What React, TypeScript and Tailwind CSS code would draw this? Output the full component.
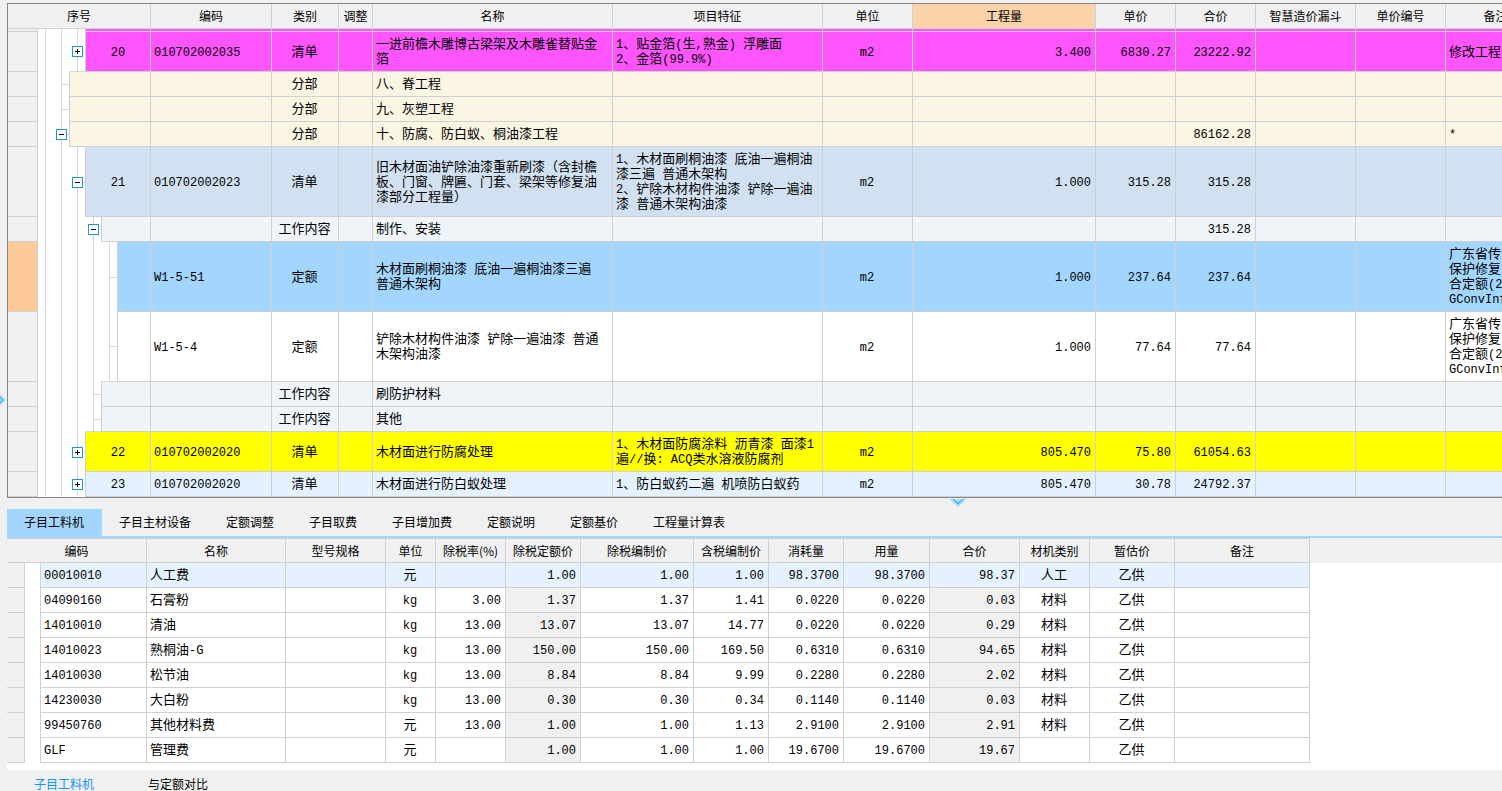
import React from "react";
import { clsx } from "clsx";

const MIXED = /([\x20-\x7e]+)/;

function Mixed({ text }: { text: string }) {
  return (
    <>
      {text.split(/(\n)/).map((line, i) =>
        line === "\n" ? (
          <br key={i} />
        ) : (
          line.split(MIXED).map((part, j) =>
            part === "" ? null : j % 2 === 1 ? (
              <span key={`${i}-${j}`} className="font-['Liberation_Mono',monospace] text-xs leading-[0px]">
                {part}
              </span>
            ) : (
              <React.Fragment key={`${i}-${j}`}>{part}</React.Fragment>
            )
          )
        )
      )}
    </>
  );
}

type Row = {
  depth: number;
  tone: string;
  node?: "plus" | "minus" | "leaf";
  sliver?: boolean;
  current?: boolean;
  no?: string;
  code?: string;
  kind?: string;
  name?: string;
  feature?: string;
  unit?: string;
  qty?: string;
  price?: string;
  total?: string;
  note?: string;
};

const PINK = "bg-[#ff55ff]";
const CREAM = "bg-[#faf4e3]";
const WORK = "bg-[#eff4f9]";

const rows: Row[] = [
  { depth: 5, tone: PINK, sliver: true },
  { depth: 5, tone: PINK, node: "plus", no: "20", code: "010702002035", kind: "清单", name: "一进前檐木雕博古梁架及木雕雀替贴金\n箔", feature: "1、贴金箔(生,熟金) 浮雕面\n2、金箔(99.9%)", unit: "m2", qty: "3.400", price: "6830.27", total: "23222.92", note: "修改工程" },
  { depth: 3, tone: CREAM, node: "leaf", kind: "分部", name: "八、脊工程" },
  { depth: 3, tone: CREAM, node: "leaf", kind: "分部", name: "九、灰塑工程" },
  { depth: 3, tone: CREAM, node: "minus", kind: "分部", name: "十、防腐、防白蚁、桐油漆工程", total: "86162.28", note: "*" },
  { depth: 5, tone: "bg-[#d2e1f2]", node: "minus", no: "21", code: "010702002023", kind: "清单", name: "旧木材面油铲除油漆重新刷漆（含封檐\n板、门窗、牌匾、门套、梁架等修复油\n漆部分工程量）", feature: "1、木材面刷桐油漆 底油一遍桐油\n漆三遍 普通木架构\n2、铲除木材构件油漆 铲除一遍油\n漆 普通木架构油漆", unit: "m2", qty: "1.000", price: "315.28", total: "315.28" },
  { depth: 7, tone: WORK, node: "minus", kind: "工作内容", name: "制作、安装", total: "315.28" },
  { depth: 9, tone: "bg-[#a3d6ff]", node: "leaf", current: true, code: "W1-5-51", kind: "定额", name: "木材面刷桐油漆 底油一遍桐油漆三遍\n普通木架构", unit: "m2", qty: "1.000", price: "237.64", total: "237.64", note: "广东省传\n保护修复\n合定额(2\nGConvInf" },
  { depth: 9, tone: "bg-white", node: "leaf", code: "W1-5-4", kind: "定额", name: "铲除木材构件油漆 铲除一遍油漆 普通\n木架构油漆", unit: "m2", qty: "1.000", price: "77.64", total: "77.64", note: "广东省传\n保护修复\n合定额(2\nGConvInf" },
  { depth: 7, tone: WORK, node: "leaf", kind: "工作内容", name: "刷防护材料" },
  { depth: 7, tone: WORK, node: "leaf", kind: "工作内容", name: "其他" },
  { depth: 5, tone: "bg-[#ffff00]", node: "plus", no: "22", code: "010702002020", kind: "清单", name: "木材面进行防腐处理", feature: "1、木材面防腐涂料 沥青漆 面漆1\n遍//换: ACQ类水溶液防腐剂", unit: "m2", qty: "805.470", price: "75.80", total: "61054.63" },
  { depth: 5, tone: "bg-[#e3f2fe]", node: "plus", no: "23", code: "010702002020", kind: "清单", name: "木材面进行防白蚁处理", feature: "1、防白蚁药二遍 机喷防白蚁药", unit: "m2", qty: "805.470", price: "30.78", total: "24792.37" },
];

const columns: { key: keyof Row | "adjust" | "funnel" | "priceNo"; label: string; width: string; align: string }[] = [
  { key: "code", label: "编码", width: "w-[121px]", align: "text-left" },
  { key: "kind", label: "类别", width: "w-[67px]", align: "text-center" },
  { key: "adjust", label: "调整", width: "w-[34px]", align: "text-center" },
  { key: "name", label: "名称", width: "w-[240px]", align: "text-left" },
  { key: "feature", label: "项目特征", width: "w-[210px]", align: "text-left" },
  { key: "unit", label: "单位", width: "w-[90px]", align: "text-center" },
  { key: "qty", label: "工程量", width: "w-[183px]", align: "text-right" },
  { key: "price", label: "单价", width: "w-[80px]", align: "text-right" },
  { key: "total", label: "合价", width: "w-[80px]", align: "text-right" },
  { key: "funnel", label: "智慧造价漏斗", width: "w-[100px]", align: "text-left" },
  { key: "priceNo", label: "单价编号", width: "w-[90px]", align: "text-left" },
  { key: "note", label: "备注", width: "w-[100px]", align: "text-left" },
];

function TreeCell({ row, next }: { row: Row; next: number }) {
  const units = Array.from({ length: row.depth }, (_, i) => i);
  return (
    <div className="flex h-full">
      <div className="w-[7px] shrink-0 bg-white" />
      {units.map((i) => (
        <div
          key={i}
          className={clsx(
            "relative flex w-2 shrink-0 items-center border-[#d8d8d8] bg-white",
            i % 2 === 0 && "border-l",
            i >= next && "border-b"
          )}
        >
          {i === row.depth - 1 && row.node && <span className="h-px w-full bg-[#d8d8d8]" />}
          {i === row.depth - 1 && (row.node === "plus" || row.node === "minus") && (
            <button
              type="button"
              aria-label={row.node === "plus" ? "展开" : "折叠"}
              className="absolute inset-y-0 -left-1.5 my-auto flex size-[11px] items-center justify-center border border-[#1e96d7] bg-white"
            >
              <svg viewBox="0 0 5 5" className="size-[5px]" shapeRendering="crispEdges">
                <path d={row.node === "plus" ? "M0 2h5v1H0zM2 0h1v5H2z" : "M0 2h5v1H0z"} fill="#000" />
              </svg>
            </button>
          )}
        </div>
      ))}
      <div className={clsx("flex grow items-center justify-center border-x border-b border-[#d0d0d0]", row.tone, !row.sliver && "pb-[3px]")}>
        {row.no && (
          <span>
            <Mixed text={row.no} />
          </span>
        )}
      </div>
    </div>
  );
}

function BillTable() {
  return (
    <table className="w-[1538px] table-fixed border-separate border-spacing-0">
      <colgroup>
        <col className="w-[30px]" />
        <col className="w-[113px]" />
        {columns.map((c) => (
          <col key={c.key} className={c.width} />
        ))}
      </colgroup>
      <thead>
        <tr className="text-xs">
          <th colSpan={2} className="h-[25px] border-r border-b border-[#d0d0d0] p-0 font-normal">序号</th>
          {columns.map((c) => (
            <th
              key={c.key}
              className={clsx("border-r border-b border-[#d0d0d0] p-0 font-normal", c.key === "qty" && "bg-[#fbd3a9]")}
            >
              {c.label}
            </th>
          ))}
        </tr>
      </thead>
      <tbody>
        {rows.map((row, i) => (
          <tr key={i}>
            <td className={clsx("border-r border-b border-[#d0d0d0] p-0", row.current && "bg-[#ffca99]")} />
            <td className={clsx("p-0", row.sliver ? "h-[3px]" : "h-px")}>
              <TreeCell row={row} next={rows[i + 1]?.depth ?? row.depth} />
            </td>
            {columns.map((c) => {
              const value = (row as Record<string, unknown>)[c.key] as string | undefined;
              return (
                <td
                  key={c.key}
                  className={clsx(
                    "border-r border-b border-[#d0d0d0] pr-1 pl-[3px] whitespace-nowrap",
                    row.sliver ? "py-0" : "pt-[3px] pb-1.5",
                    c.align,
                    row.tone
                  )}
                >
                  {value && <Mixed text={value} />}
                </td>
              );
            })}
          </tr>
        ))}
      </tbody>
    </table>
  );
}

const tabs = ["子目工料机", "子目主材设备", "定额调整", "子目取费", "子目增加费", "定额说明", "定额基价", "工程量计算表"];

const detailColumns = [
  { label: "名称", width: "w-[139px]", align: "text-left" },
  { label: "型号规格", width: "w-[100px]", align: "text-left" },
  { label: "单位", width: "w-[50px]", align: "text-center" },
  { label: "除税率(%)", width: "w-[70px]", align: "text-right" },
  { label: "除税定额价", width: "w-[75px]", align: "text-right", locked: true },
  { label: "除税编制价", width: "w-[113px]", align: "text-right" },
  { label: "含税编制价", width: "w-[75px]", align: "text-right" },
  { label: "消耗量", width: "w-[75px]", align: "text-right" },
  { label: "用量", width: "w-[86px]", align: "text-right" },
  { label: "合价", width: "w-[90px]", align: "text-right", locked: true },
  { label: "材机类别", width: "w-[70px]", align: "text-center" },
  { label: "暂估价", width: "w-[85px]", align: "text-center" },
  { label: "备注", width: "w-[135px]", align: "text-left" },
];

const details: string[][] = [
  ["00010010", "人工费", "", "元", "", "1.00", "1.00", "1.00", "98.3700", "98.3700", "98.37", "人工", "乙供", ""],
  ["04090160", "石膏粉", "", "kg", "3.00", "1.37", "1.37", "1.41", "0.0220", "0.0220", "0.03", "材料", "乙供", ""],
  ["14010010", "清油", "", "kg", "13.00", "13.07", "13.07", "14.77", "0.0220", "0.0220", "0.29", "材料", "乙供", ""],
  ["14010023", "熟桐油-G", "", "kg", "13.00", "150.00", "150.00", "169.50", "0.6310", "0.6310", "94.65", "材料", "乙供", ""],
  ["14010030", "松节油", "", "kg", "13.00", "8.84", "8.84", "9.99", "0.2280", "0.2280", "2.02", "材料", "乙供", ""],
  ["14230030", "大白粉", "", "kg", "13.00", "0.30", "0.30", "0.34", "0.1140", "0.1140", "0.03", "材料", "乙供", ""],
  ["99450760", "其他材料费", "", "元", "13.00", "1.00", "1.00", "1.13", "2.9100", "2.9100", "2.91", "材料", "乙供", ""],
  ["GLF", "管理费", "", "元", "", "1.00", "1.00", "1.00", "19.6700", "19.6700", "19.67", "", "乙供", ""],
];

function DetailTable() {
  return (
    <table className="w-full table-fixed border-separate border-spacing-0">
      <colgroup>
        <col className="w-[18px]" />
        <col className="w-[15px]" />
        <col className="w-[107px]" />
        {detailColumns.map((c) => (
          <col key={c.label} className={c.width} />
        ))}
        <col />
      </colgroup>
      <thead>
        <tr className="bg-[#f0f0f0] text-xs">
          <th colSpan={3} className="h-[25px] border-y border-r border-[#d0d0d0] p-0 font-normal">编码</th>
          {detailColumns.map((c) => (
            <th key={c.label} className="border-y border-r border-[#d0d0d0] p-0 font-normal whitespace-nowrap">{c.label}</th>
          ))}
          <td />
        </tr>
      </thead>
      <tbody>
        {details.map((cells, r) => (
          <tr key={cells[0]}>
            <td className="border-r border-b border-[#d0d0d0] bg-[#f0f0f0] p-0" />
            <td className="p-0" />
            {cells.map((value, i) => {
              const column = detailColumns[i - 1];
              return (
                <td
                  key={i}
                  className={clsx(
                    "h-[25px] border-r border-b border-[#d0d0d0] pt-[3px] pr-1 pb-1.5 pl-[3px] whitespace-nowrap",
                    i === 0 && "border-l",
                    column?.align ?? "text-left",
                    r === 0 ? "bg-[#e3f2fe]" : column?.locked ? "bg-[#f0f0f0]" : "bg-white"
                  )}
                >
                  <Mixed text={value} />
                </td>
              );
            })}
            <td />
          </tr>
        ))}
      </tbody>
    </table>
  );
}

export default function App() {
  return (
    <div className="relative min-h-screen overflow-hidden bg-[#f0f0f0] pt-[3px] pl-[7px] font-['Noto_Sans_CJK_SC',sans-serif] text-[13px] leading-[15px] text-black">
      <svg viewBox="0 0 6 12" className="absolute top-[394px] left-0 h-3 w-1.5" fill="none">
        <path d="M-1 0.5L4.5 6L-1 11.5" stroke="#9ad8f7" strokeWidth="1.5" />
        <path d="M-1 2.5L2.5 6L-1 9.5" stroke="#3fb0ea" strokeWidth="1.5" />
      </svg>

      <section className="overflow-hidden border-y border-l border-[#85858b]">
        <BillTable />
      </section>

      <div className="relative h-[11px]">
        <svg viewBox="0 0 16 8" className="absolute top-px left-[943px] h-2 w-4" fill="none">
          <path d="M0.5 0L8 7L15.5 0" stroke="#9ad8f7" strokeWidth="1.5" />
          <path d="M3 0L8 4.5L13 0" stroke="#3fb0ea" strokeWidth="1.5" />
          <path d="M6 0L8 2L10 0" stroke="#9ad8f7" strokeWidth="1.5" />
        </svg>
      </div>

      <nav className="flex border-b-2 border-[#a3d6ff] text-xs">
        {tabs.map((tab, i) => (
          <button
            key={tab}
            type="button"
            className={clsx("h-[27px] pr-[18px] pb-0.5 pl-[17px] whitespace-nowrap", i === 0 && "bg-[#a3d6ff]")}
          >
            {tab}
          </button>
        ))}
      </nav>

      <section className="overflow-hidden bg-white pb-[7px]">
        <DetailTable />
      </section>

      <nav className="flex gap-[54px] pt-1.5 pl-[27px] text-xs">
        <button type="button" className="text-[#0f93ff]">子目工料机</button>
        <button type="button">与定额对比</button>
      </nav>
    </div>
  );
}
